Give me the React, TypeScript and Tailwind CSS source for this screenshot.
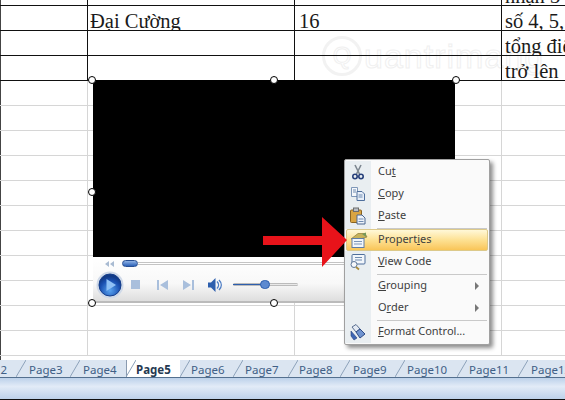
import React from "react";

const rows = [
  { subject: "", credit: "", note: "nhận 3 điểm" },
  { subject: "Đại Cường", credit: "16", note: "số 4, 5, 6" },
  { subject: "", credit: "", note: "tổng điểm" },
  { subject: "", credit: "", note: "trở lên" },
];

const emptyRows = Array.from({ length: 11 }, (_, i) => i);

const tabs = [
  { label: "2", box: "w-[16px] justify-end pr-[9px]" },
  { label: "Page3", box: "w-[54px] pl-[13px]" },
  { label: "Page4", box: "w-[56px] pl-[13px]" },
  { label: "Page5", box: "w-[54px] pl-[9px]", active: true },
  { label: "Page6", box: "w-[53px] pl-[11px]" },
  { label: "Page7", box: "w-[55px] pl-[12px]" },
  { label: "Page8", box: "w-[52px] pl-[11px]" },
  { label: "Page9", box: "w-[55px] pl-[13px]" },
  { label: "Page10", box: "w-[62px] pl-[12px]" },
  { label: "Page11", box: "w-[61px] pl-[12px]" },
  { label: "Page12", box: "w-[61px] pl-[13px]" },
];

function Handle({ className }: { className: string }) {
  return <div className={`absolute h-[8px] w-[8px] rounded-full border border-black bg-white ${className}`} />;
}

function CutIcon() {
  return (
    <svg width="16" height="16" viewBox="0 0 16 16">
      <path d="M5 1 L9.5 10 M11 1 L6.5 10" stroke="#7d8790" strokeWidth="1.6" fill="none" />
      <circle cx="5" cy="12.5" r="2.2" fill="none" stroke="#27407a" strokeWidth="1.6" />
      <circle cx="11" cy="12.5" r="2.2" fill="none" stroke="#27407a" strokeWidth="1.6" />
    </svg>
  );
}

function CopyIcon() {
  return (
    <svg width="16" height="16" viewBox="0 0 16 16">
      <path d="M1.5 1.5h6v9h-6z" fill="#f4f7fb" stroke="#7e97b8" />
      <path d="M7 5.5h5l2.5 2.5v6.5H7z" fill="#e6eef8" stroke="#4f6f9c" />
      <path d="M8.5 9h4M8.5 11h4M3 4h3M3 6h3" stroke="#6f8bb0" />
    </svg>
  );
}

function PasteIcon() {
  return (
    <svg width="18" height="18" viewBox="0 0 18 18">
      <rect x="1.5" y="3" width="11" height="12.5" rx="1" fill="#d9a441" stroke="#8a6420" />
      <rect x="4.5" y="1" width="5" height="3.5" fill="#b8bec6" stroke="#6c6c6c" />
      <path d="M8 8h5l3 3v6H8z" fill="#eef3fa" stroke="#4a6690" />
      <path d="M9.5 12h5M9.5 14.5h5" stroke="#6f8bb0" />
    </svg>
  );
}

function PropertiesIcon() {
  return (
    <svg width="18" height="18" viewBox="0 0 18 18">
      <path d="M1 8 L8 2.5 L15 2.5 L17 6 L10 8z" fill="#c7b25a" stroke="#8a7a3a" strokeWidth="0.7" />
      <rect x="2" y="7.5" width="12" height="9" fill="#f2f6fb" stroke="#607da5" />
      <path d="M4 10.5h8M4 13h8" stroke="#7c96ba" />
      <path d="M12 3 L16 1.5 L16 6z" fill="#77985a" />
    </svg>
  );
}

function ViewCodeIcon() {
  return (
    <svg width="18" height="18" viewBox="0 0 18 18">
      <rect x="3" y="1.5" width="13" height="9.5" rx="1" fill="#f2f6fb" stroke="#4f6f9c" />
      <path d="M6 4.5h7M6 7h7" stroke="#6f8bb0" />
      <circle cx="5" cy="11.5" r="3" fill="#f6f8fb" stroke="#5d7697" />
      <path d="M7 14 L10 16.5" stroke="#a98a3a" strokeWidth="1.8" />
    </svg>
  );
}

function FormatIcon() {
  return (
    <svg width="18" height="18" viewBox="0 0 18 18">
      <path d="M3 4 L7 1.5 L11 6 L7 9z" fill="#e4eaf3" stroke="#5a6f90" />
      <path d="M7 9 L11 6 L16 11 L11 15z" fill="#6f93cf" stroke="#2d4a85" />
      <path d="M2 8 L8 15 L5 17 L2 13z" fill="#3d66b4" stroke="#27407a" strokeWidth="0.6" />
    </svg>
  );
}

const Strip = ({ children }: { children?: React.ReactNode }) => (
  <div className="flex h-full w-[26px] shrink-0 items-center justify-center bg-[#e9eef1]">{children}</div>
);

function MenuItem({ icon, children, sub }: { icon?: React.ReactNode; children: React.ReactNode; sub?: boolean }) {
  return (
    <div className="flex h-[22px] items-center">
      <Strip>{icon}</Strip>
      <div className="ml-[7px] flex-1 -translate-y-[1px]">{children}</div>
      {sub && <div className="mr-[10px] h-0 w-0 border-y-[4px] border-l-[4px] border-y-transparent border-l-[#777]" />}
    </div>
  );
}

function Separator() {
  return (
    <div className="flex h-[2px]">
      <Strip />
      <div className="ml-[6px] mr-[2px] flex-1 border-b border-[#c9c9c9]" />
    </div>
  );
}

function ContextMenu() {
  return (
    <div className="absolute left-[344px] top-[159px] w-[146px] rounded-[2px] border border-[#a0a0a0] bg-[#fafafa] py-[1px] text-[11px] text-[#404040] shadow-[3px_3px_4px_rgba(0,0,0,0.45)] [font-family:'Noto_Sans',sans-serif]">
      <MenuItem icon={<CutIcon />}>
        Cu<u>t</u>
      </MenuItem>
      <MenuItem icon={<CopyIcon />}>
        <u>C</u>opy
      </MenuItem>
      <MenuItem icon={<PasteIcon />}>
        <u>P</u>aste
      </MenuItem>
      <Separator />
      <div className="mx-[1px] flex h-[22px] items-center rounded-[2px] border border-[#dcc98a] bg-gradient-to-b from-[#fff8d8] via-[#fde192] to-[#f9c557]">
        <div className="flex w-[24px] shrink-0 justify-center">
          <PropertiesIcon />
        </div>
        <div className="ml-[7px] -translate-y-[1px]">
          Propert<u>i</u>es
        </div>
      </div>
      <MenuItem icon={<ViewCodeIcon />}>
        <u>V</u>iew Code
      </MenuItem>
      <Separator />
      <MenuItem sub>
        <u>G</u>rouping
      </MenuItem>
      <MenuItem sub>
        O<u>r</u>der
      </MenuItem>
      <Separator />
      <MenuItem icon={<FormatIcon />}>
        <u>F</u>ormat Control...
      </MenuItem>
    </div>
  );
}

function MediaControls() {
  return (
    <div className="h-[44px] bg-gradient-to-b from-white via-[#f8f8f8] via-60% to-[#dedede]">
      {/* seek row */}
      <div className="flex h-[13px] items-center pl-[12px]">
        <svg width="9" height="6" viewBox="0 0 9 6">
          <path d="M4 0v6L0 3zM9 0v6L5 3z" fill="#a9bbd2" />
        </svg>
        <div className="ml-[8px] h-[7px] w-[16px] rounded-full border border-[#274f93] bg-gradient-to-b from-[#8fb2e4] to-[#2d62b8]" />
        <div className="h-[3px] w-[209px] border-y border-[#c4c4c4] bg-white" />
      </div>
      {/* buttons */}
      <div className="flex h-[29px] items-center pl-[3px]">
        <svg width="28" height="28" viewBox="0 0 28 28">
          <defs>
            <radialGradient id="playBall" cx="50%" cy="75%" r="65%">
              <stop offset="0%" stopColor="#5aa4f0" />
              <stop offset="70%" stopColor="#1a4fb0" />
              <stop offset="100%" stopColor="#123a86" />
            </radialGradient>
          </defs>
          <circle cx="14" cy="14" r="13.5" fill="#cfd9e8" />
          <circle cx="14" cy="14" r="11" fill="url(#playBall)" stroke="#163f8c" />
          <path d="M10.5 8 L20 14 L10.5 20z" fill="#8fc0f5" />
        </svg>
        <div className="ml-[7px] h-[9px] w-[9px] bg-[#a9bfdc]" />
        <svg className="ml-[17px]" width="11" height="10" viewBox="0 0 11 10">
          <path d="M0 0h2v10H0zM11 0v10L3 5z" fill="#a9bfdc" />
        </svg>
        <svg className="ml-[15px]" width="11" height="10" viewBox="0 0 11 10">
          <path d="M11 0H9v10h2zM0 0v10l8-5z" fill="#a9bfdc" />
        </svg>
        <svg className="ml-[14px]" width="15" height="14" viewBox="0 0 15 14">
          <path d="M0 4.5h3L7.5 0v14L3 9.5H0z" fill="#2d5fae" />
          <path d="M9 3.5c2 2 2 5 0 7M11 2c3 3 3 7 0 10" stroke="#4c7cc4" strokeWidth="1.4" fill="none" />
        </svg>
        <div className="relative ml-[10px] h-[3px] w-[65px] rounded-full border-y border-[#bbb] bg-[#e8e8e8]">
          <div className="h-full w-[32px] bg-[#2d5fae]" />
          <div className="absolute left-[27px] top-[-4px] h-[9px] w-[10px] rounded-full border border-[#2d5fae] bg-[#5d8ad0]" />
        </div>
      </div>
    </div>
  );
}

export default function App() {
  return (
    <div className="relative flex h-[400px] w-[565px] flex-col overflow-hidden bg-white shadow-[inset_1px_0_0_#444]">
      {/* watermark, sits behind the sheet text */}
      <div className="absolute left-[322px] top-[36px] flex items-center text-transparent [-webkit-text-stroke:1px_#f0f0f0] [font-family:'Liberation_Sans',sans-serif]">
        <div className="flex h-[40px] w-[40px] items-center justify-center rounded-full border-[3px] border-[#f2f2f2] text-[24px]">
          Q
        </div>
        <span className="ml-[2px] text-[34px] leading-none tracking-[1px]">uantrimang</span>
      </div>

      {/* sheet */}
      <div className="relative h-[360px] shrink-0 overflow-hidden text-[20.5px] leading-[22px] text-[#1a1a1a] [font-family:'Liberation_Serif',serif]">
        {rows.map((row, i) => (
          <div key={i} className={`flex border-b border-[#111] ${i === 0 ? "h-[6px]" : "h-[25px]"}`}>
            <div className="w-[88px] shrink-0 border-r border-[#111]" />
            <div className="flex w-[207px] shrink-0 items-end overflow-hidden border-r border-[#111] pl-[2px]">
              <span className="translate-y-[2px]">{row.subject}</span>
            </div>
            <div className="flex w-[207px] shrink-0 items-end overflow-hidden border-r border-[#111] pl-[4px]">
              <span className="translate-y-[2px]">{row.credit}</span>
            </div>
            <div className="flex flex-1 items-end overflow-hidden whitespace-nowrap pl-[3px]">
              <span className="shrink-0 translate-y-[2px]">{row.note}</span>
            </div>
          </div>
        ))}
        {emptyRows.map((i) => (
          <div key={i} className="flex h-[25px] border-b border-[#d6d6d6]">
            <div className="w-[88px] shrink-0 border-r border-[#d6d6d6]" />
            <div className="w-[207px] shrink-0 border-r border-[#d6d6d6]" />
            <div className="w-[207px] shrink-0 border-r border-[#d6d6d6]" />
            <div className="flex-1" />
          </div>
        ))}
      </div>

      {/* sheet tabs */}
      <div className="flex h-[18px] shrink-0 items-stretch border-b border-[#54708f] bg-[#dbe5f1] text-[11.5px] text-[#3f5f86] [font-family:'Noto_Sans',sans-serif]">
        {tabs.map((tab) => (
          <div
            key={tab.label}
            className={`relative flex shrink-0 items-center whitespace-nowrap pt-[2px] ${tab.box} ${
              tab.active ? "border-l border-[#8a9bb0] bg-white font-bold text-[#263a52]" : ""
            }`}
          >
            {tab.label}
            <svg className="absolute right-[-10px] top-0 z-10" width="10" height="17" viewBox="0 0 10 17">
              <path d="M0 17 L10 0" stroke="#8da2ba" fill="none" />
            </svg>
          </div>
        ))}
      </div>
      <div className="flex-1 border-b border-[#111] bg-gradient-to-b from-[#bcd1ea] via-[#e2ebf7] via-40% to-[#bdd1ea]" />

      {/* embedded media player */}
      <div className="absolute left-[93px] top-[80px] flex h-[223px] w-[362px] flex-col border-b-2 border-[#bbbbbb]">
        <div className="flex-1 bg-black" />
        <MediaControls />
      </div>
      <Handle className="left-[88px] top-[76px]" />
      <Handle className="left-[270px] top-[76px]" />
      <Handle className="left-[452px] top-[76px]" />
      <Handle className="left-[88px] top-[188px]" />
      <Handle className="left-[88px] top-[299px]" />
      <Handle className="left-[270px] top-[299px]" />

      <ContextMenu />

      {/* red arrow */}
      <svg className="absolute left-[262px] top-[216px]" width="86" height="52" viewBox="0 0 86 52">
        <path d="M1 20 H60 L60 1 L85 24 L60 51 L60 29 H1z" fill="#e8131a" />
      </svg>
    </div>
  );
}
